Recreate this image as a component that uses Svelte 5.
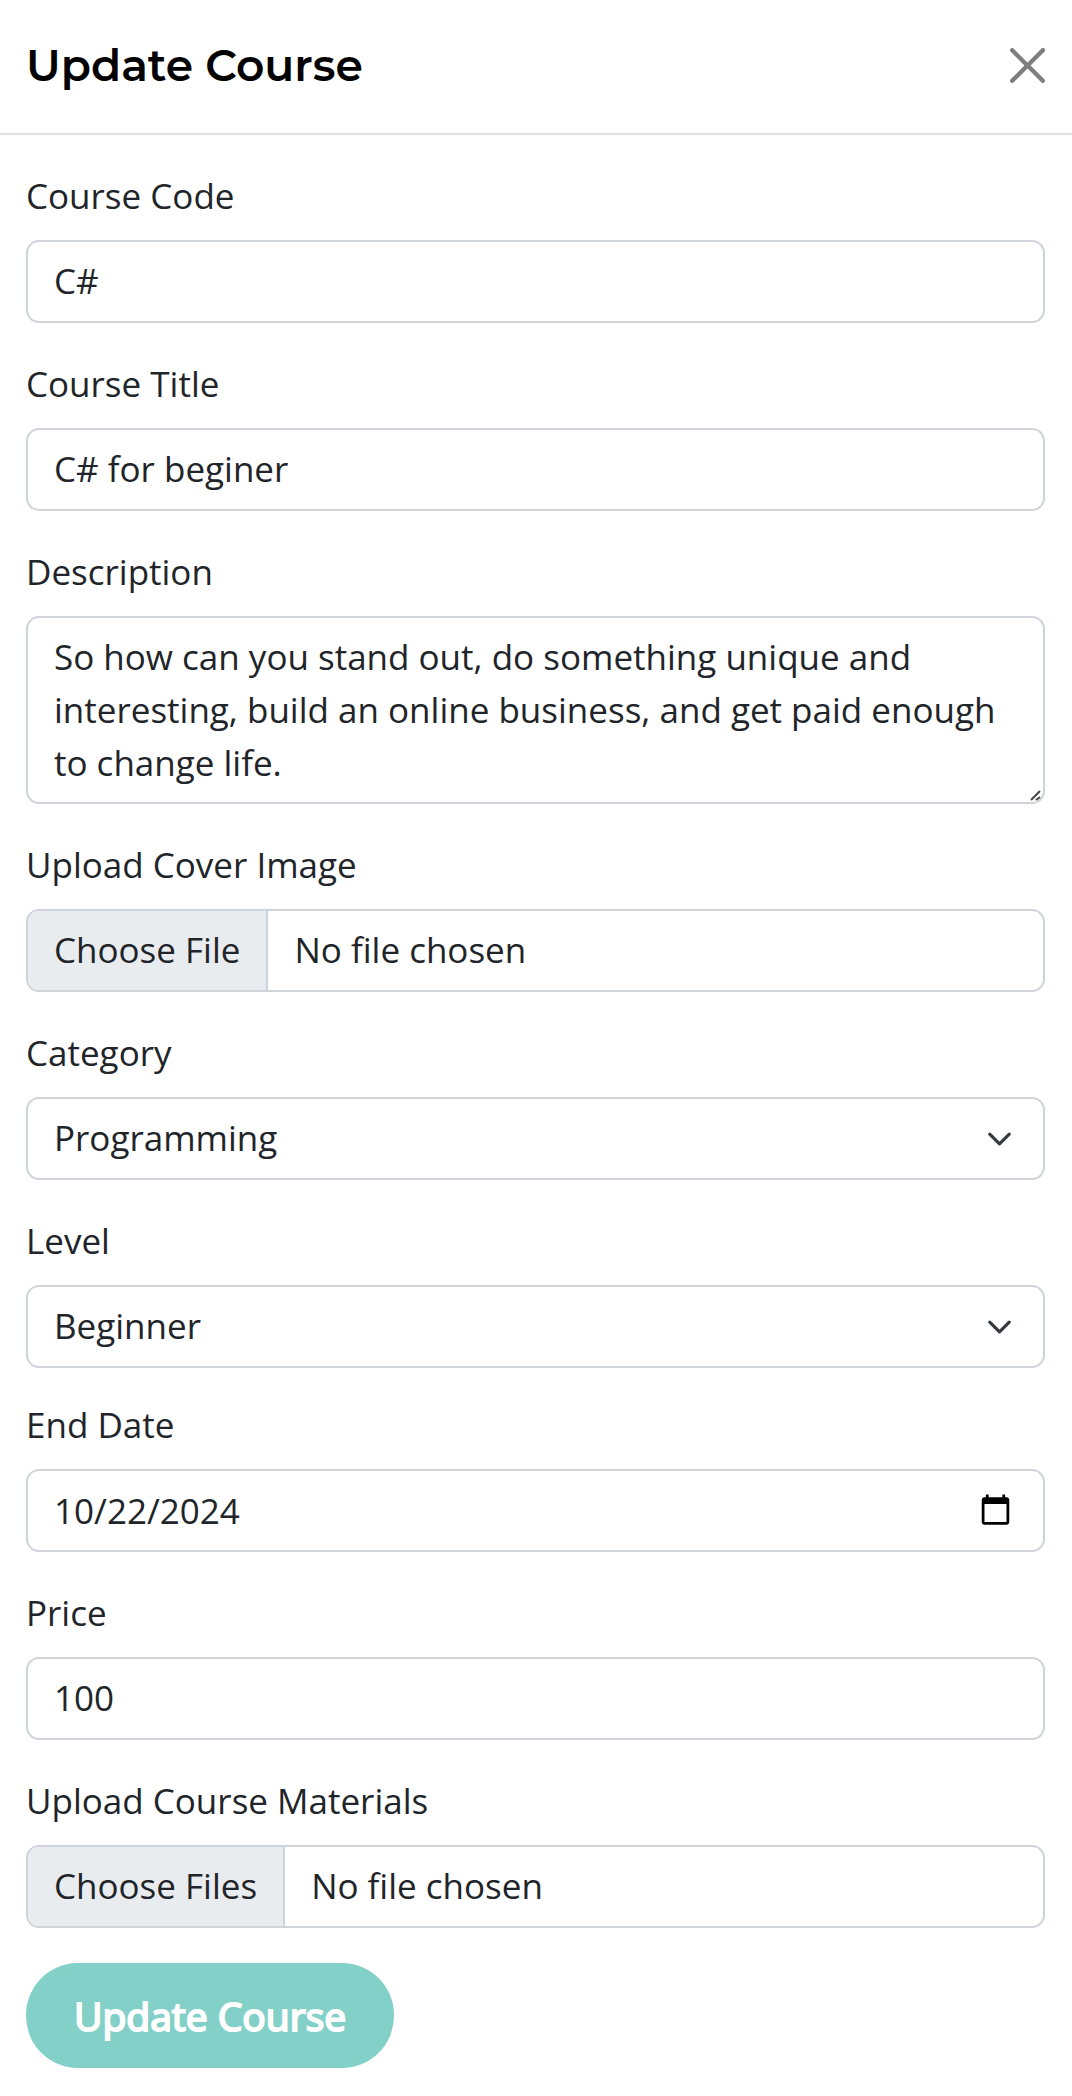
<script>
  let code = $state('C#');
  let title = $state('C# for beginer');
  let description = $state(
    'So how can you stand out, do something unique and interesting, build an online business, and get paid enough to change life.'
  );
  let category = $state('Programming');
  let level = $state('Beginner');
  let endDate = $state('2024-10-22');
  let price = $state('100');
</script>

{#snippet chevron()}
  <svg class="chevron" viewBox="0 0 16 16" aria-hidden="true">
    <path d="m2 5 6 6 6-6" fill="none" stroke="#343a40" stroke-width="2" stroke-linecap="round" stroke-linejoin="round" />
  </svg>
{/snippet}

<div class="modal">
  <header>
    <h1>Update Course</h1>
    <button type="button" class="close" aria-label="Close">
      <svg viewBox="0 0 16 16" aria-hidden="true">
        <path d="M.293.293a1 1 0 0 1 1.414 0L8 6.586 14.293.293a1 1 0 1 1 1.414 1.414L9.414 8l6.293 6.293a1 1 0 0 1-1.414 1.414L8 9.414l-6.293 6.293a1 1 0 0 1-1.414-1.414L6.586 8 .293 1.707a1 1 0 0 1 0-1.414z" />
      </svg>
    </button>
  </header>

  <form onsubmit={(e) => e.preventDefault()}>
    <div class="group">
      <div class="field">
        <label for="code">Course Code</label>
        <input class="control" id="code" type="text" bind:value={code} />
      </div>
      <div class="field">
        <label for="title">Course Title</label>
        <input class="control" id="title" type="text" bind:value={title} />
      </div>
      <div class="field">
        <label for="description">Description</label>
        <textarea class="control" id="description" rows="3" bind:value={description}></textarea>
      </div>
      <div class="field">
        <label for="cover">Upload Cover Image</label>
        <input class="control" id="cover" type="file" accept="image/*" />
      </div>
      <div class="field">
        <label for="category">Category</label>
        <div class="select">
          <select class="control" id="category" bind:value={category}>
            <option>Programming</option>
          </select>
          {@render chevron()}
        </div>
      </div>
      <div class="field">
        <label for="level">Level</label>
        <div class="select">
          <select class="control" id="level" bind:value={level}>
            <option>Beginner</option>
          </select>
          {@render chevron()}
        </div>
      </div>
    </div>

    <div class="group">
      <div class="field">
        <label for="end-date">End Date</label>
        <input class="control" id="end-date" type="date" bind:value={endDate} />
      </div>
      <div class="field">
        <label for="price">Price</label>
        <input class="control" id="price" type="text" inputmode="decimal" bind:value={price} />
      </div>
      <div class="field">
        <label for="materials">Upload Course Materials</label>
        <input class="control" id="materials" type="file" multiple />
      </div>
      <button class="submit" type="submit">Update Course</button>
    </div>
  </form>
</div>

<style>
  :global(body) {
    background: #fff;
  }

  .modal {
    font-family: 'Open Sans', 'Noto Sans', sans-serif;
    font-size: 35px;
    line-height: 53px;
    color: #212529;
  }

  header {
    display: flex;
    align-items: center;
    justify-content: space-between;
    padding: 34px 27px 36px 26px;
    border-bottom: 2px solid #dee2e6;
  }

  h1 {
    margin: 0;
    font-family: Montserrat, Inter, sans-serif;
    font-size: 44px;
    font-weight: 600;
    line-height: 63px;
    color: #000;
  }

  .close {
    display: flex;
    padding: 0;
    border: 0;
    background: none;
    opacity: 0.5;
    cursor: pointer;
  }

  .close svg {
    width: 35px;
    height: 35px;
  }

  form {
    display: flex;
    flex-direction: column;
    gap: 31px;
    padding: 35px 27px 28px 26px;
  }

  .group {
    display: flex;
    flex-direction: column;
    gap: 35px;
  }

  .field {
    display: flex;
    flex-direction: column;
    gap: 19px;
  }

  label {
    line-height: 51px;
  }

  .control {
    display: block;
    box-sizing: border-box;
    width: 100%;
    min-height: 83px;
    margin: 0;
    padding: 12px 26px 14px;
    border: 2px solid #ced4da;
    border-radius: 13px;
    background: #fff;
    color: inherit;
    font: inherit;
    appearance: none;
  }

  textarea.control {
    padding: 12px 26px 13px;
    resize: vertical;
  }

  textarea::-webkit-resizer {
    background: url("data:image/svg+xml,%3Csvg xmlns='http://www.w3.org/2000/svg' viewBox='0 0 15 15'%3E%3Cpath d='M3 13L12 4M8 13l4-3' fill='none' stroke='%23444' stroke-width='2'/%3E%3C/svg%3E") no-repeat center / 15px 15px;
  }

  input[type='file'] {
    overflow: hidden;
  }

  input[type='file']::file-selector-button {
    margin: -12px 26px -14px -26px;
    padding: 12px 26px 14px;
    border: 0 solid #ced4da;
    border-right-width: 2px;
    border-radius: 0;
    background: #e9ecef;
    color: inherit;
    font: inherit;
  }

  input[type='date'].control {
    padding: 13px 28px 13px 26px;
  }

  input[type='date']::-webkit-datetime-edit,
  input[type='date']::-webkit-datetime-edit-fields-wrapper,
  input[type='date']::-webkit-datetime-edit-month-field,
  input[type='date']::-webkit-datetime-edit-day-field,
  input[type='date']::-webkit-datetime-edit-year-field {
    padding: 0;
  }

  .select {
    position: relative;
  }

  .chevron {
    position: absolute;
    top: 0;
    bottom: 0;
    right: 28px;
    width: 35px;
    height: 26px;
    margin: auto;
    pointer-events: none;
  }

  .submit {
    align-self: flex-start;
    padding: 26px 48px;
    border: 0;
    border-radius: 52px;
    background: #82d0c7;
    color: #fff;
    font-family: inherit;
    font-size: 39px;
    font-weight: 400;
    line-height: 53px;
    -webkit-text-stroke: 2px #fff;
    cursor: pointer;
  }
</style>
